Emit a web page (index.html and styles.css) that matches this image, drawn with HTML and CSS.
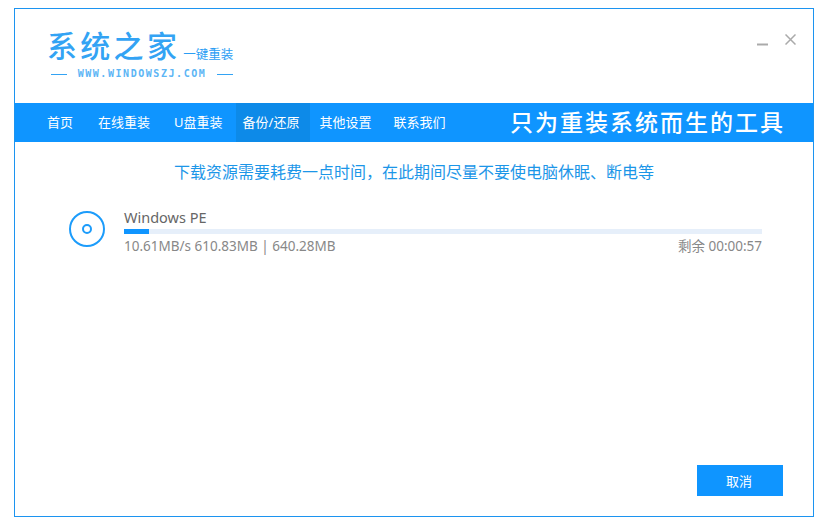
FILE: index.html
```html
<!DOCTYPE html>
<html lang="zh-CN">
<head>
<meta charset="utf-8">
<title>系统之家一键重装</title>
<link rel="stylesheet" href="styles.css">
</head>
<body>
<div class="window">
  <header class="top">
    <div class="logo">
      <div class="logo-main"><span class="logo-name">系统之家</span><span class="logo-sub">一键重装</span></div>
      <div class="logo-url"><i class="dash"></i><span>WWW.WINDOWSZJ.COM</span><i class="dash"></i></div>
    </div>
    <div class="controls">
      <svg class="ctl" width="11" height="12" viewBox="0 0 11 12"><path d="M0 10.500H11" stroke="#aaa" stroke-width="2" fill="none"/></svg>
      <svg class="ctl" width="11" height="11" viewBox="0 0 11 11"><path d="M.5 .5 10.500 10.500M10.500 .5 .5 10.500" stroke="#aaa" stroke-width="1.500" fill="none"/></svg>
    </div>
  </header>
  <nav class="nav">
    <a class="nav-item first">首页</a>
    <a class="nav-item online">在线重装</a>
    <a class="nav-item usb">U盘重装</a>
    <a class="nav-item active">备份/还原</a>
    <a class="nav-item other">其他设置</a>
    <a class="nav-item contact">联系我们</a>
    <span class="slogan">只为重装系统而生的工具</span>
  </nav>
  <main class="main">
    <p class="notice">下载资源需要耗费一点时间，在此期间尽量不要使电脑休眠、断电等</p>
    <section class="task">
      <svg class="disc" width="36" height="36" viewBox="0 0 36 36"><circle cx="18" cy="18" r="17" fill="none" stroke="#1c9cfb" stroke-width="2"/><circle cx="18" cy="18" r="4" fill="none" stroke="#1c9cfb" stroke-width="2"/></svg>
      <div class="task-body">
        <div class="task-title">Windows PE</div>
        <div class="bar"><div class="bar-fill" style="width:25px"></div></div>
        <div class="task-meta"><span>10.61MB/s 610.83MB | 640.28MB</span><span>剩余 00:00:57</span></div>
      </div>
    </section>
    <div class="actions"><button class="cancel">取消</button></div>
  </main>
</div>
</body>
</html>
```
FILE: styles.css
```css
* { box-sizing: border-box; }
html, body { height: 100%; }
body {
  margin: 0;
  padding: 8px 0 0 14px;
  background: #fff;
  font-family: "Noto Sans", "Noto Sans CJK SC", sans-serif;
  overflow: hidden;
}
.window {
  width: 800px;
  height: 509px;
  border: 1px solid #1c94f0;
  display: flex;
  flex-direction: column;
}
.top {
  height: 94px;
  display: flex;
  justify-content: space-between;
  flex: none;
}
.logo { padding: 19px 0 0 32px; width: 230px; }
.logo-main { display: flex; align-items: flex-end; height: 36px; }
.logo-name {
  font-size: 30px;
  line-height: 36px;
  letter-spacing: 3.300px;
  color: #33a3f4;
  white-space: nowrap;
  font-weight: 500;
}
.logo-sub {
  font-size: 12.500px;
  line-height: 18px;
  color: #2a9df4;
  margin-left: 3px;
  white-space: nowrap;
}
.logo-url {
  display: flex;
  align-items: center;
  justify-content: space-between;
  margin-top: 3px;
  padding-left: 4px;
  width: 186px;
  height: 14px;
}
.logo-url span {
  font-family: "DejaVu Sans Mono", monospace;
  font-size: 10px;
  letter-spacing: 1.550px;
  font-weight: 700;
  color: #5cb5f5;
  line-height: 14px;
}
.dash { display: block; width: 16px; height: 1px; background: #33a3f4; }
.controls { display: flex; gap: 17px; padding: 25px 17px 0 0; align-items: flex-start; }
.ctl { display: block; }
.nav {
  height: 39px;
  flex: none;
  background: #0f95ff;
  display: flex;
  align-items: stretch;
  color: #fff;
  font-size: 13px;
}
.nav-item { display: flex; align-items: center; white-space: nowrap; line-height: 39px; padding-bottom: 1px; }
.first { margin-left: 32px; }
.online { margin-left: 25px; }
.usb { margin-left: 24px; }
.active { margin-left: 13px; padding: 0 0 1px 7px; width: 74px; background: #0d8ae8; }
.other { margin-left: 10px; }
.contact { margin-left: 22px; }
.slogan {
  margin-left: auto;
  margin-right: 28px;
  font-size: 23px;
  letter-spacing: 2px;
  line-height: 39px;
  font-weight: 500;
  white-space: nowrap;
}
.main { flex: 1; display: flex; flex-direction: column; padding: 0 30px 20px 54px; }
.notice {
  margin: 18px 0 0 -54px;
  width: 798px;
  font-size: 16px;
  line-height: 24px;
  color: #1c96e8;
  text-align: center;
}
.task { display: flex; margin-top: 23px; gap: 19px; padding-right: 21px; }
.disc { display: block; margin-top: 4px; flex: none; }
.task-body { flex: 1; }
.task-title { font-size: 14.500px; line-height: 20px; color: #666; }
.bar { height: 5px; background: #e6effa; margin-top: 2px; }
.bar-fill { height: 5px; background: #0f95ff; }
.task-meta {
  display: flex;
  justify-content: space-between;
  font-size: 13.500px;
  line-height: 20px;
  color: #888;
  margin-top: 2px;
}
.actions { margin-top: auto; display: flex; justify-content: flex-end; }
.cancel {
  width: 86px;
  height: 31px;
  border: 0;
  padding: 0 2px 0 0;
  background: #0f95ff;
  color: #fff;
  font-family: inherit;
  font-size: 13px;
}
```
